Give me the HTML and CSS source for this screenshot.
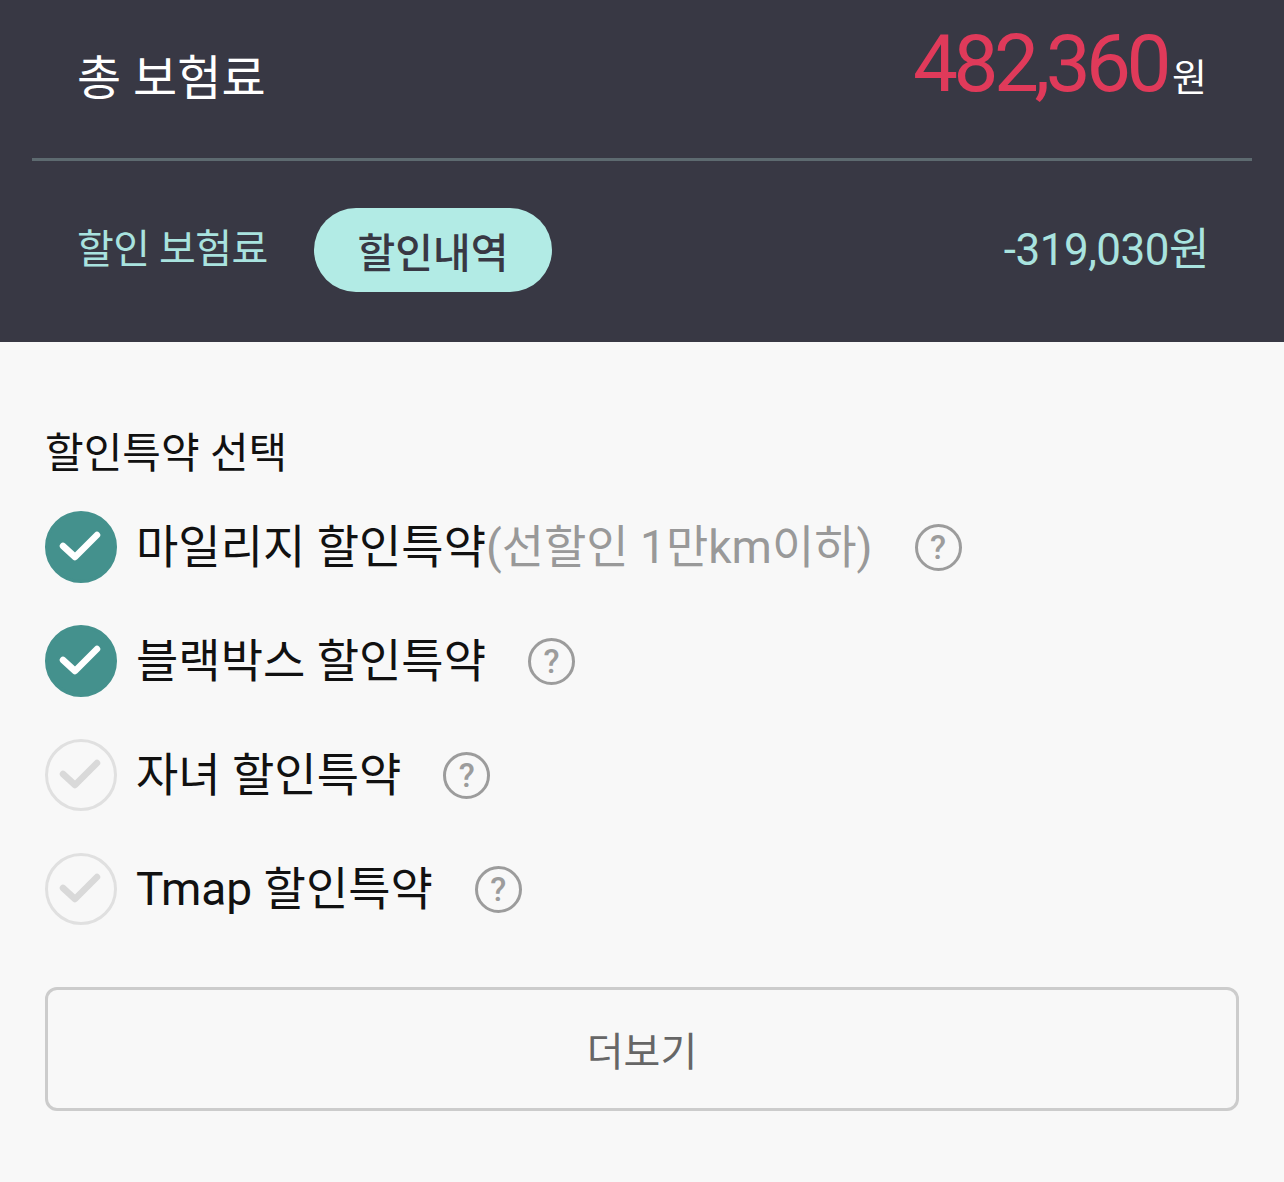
FILE: index.html
```html
<!DOCTYPE html>
<html>
<head>
    <title>할인특약 선택</title>
    <link rel="stylesheet" href="styles.css">
</head>
<body>
    <div class="summary">
        <div class="total-row">
            <span class="total-label">총 보험료</span>
            <span class="total-price">482,360<span class="won">원</span></span>
        </div>
        <div class="divider"></div>
        <div class="discount-row">
            <span class="discount-label">할인 보험료</span>
            <button class="history-pill">할인내역</button>
            <span class="discount-price">-319,030원</span>
        </div>
    </div>

    <div class="options">
        <h2 class="options-title">할인특약 선택</h2>
        <ul class="option-list">
            <li class="option checked">
                <span class="check"><svg viewBox="0 0 72 72"><path d="M18 35 L30 46 L52 24"/></svg></span>
                <span class="option-name">마일리지 할인특약<span class="note">(선할인 1만km이하)</span></span>
                <span class="help">?</span>
            </li>
            <li class="option checked">
                <span class="check"><svg viewBox="0 0 72 72"><path d="M18 35 L30 46 L52 24"/></svg></span>
                <span class="option-name">블랙박스 할인특약</span>
                <span class="help">?</span>
            </li>
            <li class="option">
                <span class="check"><svg viewBox="0 0 72 72"><path d="M18 35 L30 46 L52 24"/></svg></span>
                <span class="option-name">자녀 할인특약</span>
                <span class="help">?</span>
            </li>
            <li class="option">
                <span class="check"><svg viewBox="0 0 72 72"><path d="M18 35 L30 46 L52 24"/></svg></span>
                <span class="option-name">Tmap 할인특약</span>
                <span class="help">?</span>
            </li>
        </ul>
        <button class="more-button">더보기</button>
    </div>
</body>
</html>
```

FILE: styles.css
```css
body {
    margin: 0;
    font-family: Roboto, "Noto Sans CJK KR", sans-serif;
    background-color: #f8f8f8;
}

.summary {
    background-color: #383844;
    padding: 0 32px;
    height: 342px;
}

.total-row {
    height: 158px;
    display: flex;
    align-items: center;
    justify-content: space-between;
    padding: 0 45px;
}

.total-label {
    color: #ffffff;
    font-size: 48px;
    line-height: 1;
}

.total-price {
    color: #e03a5a;
    font-size: 80px;
    line-height: 1;
    margin-top: -30px;
    letter-spacing: -4.5px;
}

.won {
    color: #ffffff;
    font-size: 38px;
    letter-spacing: 0;
    margin-left: 5px;
}

.divider {
    height: 3px;
    background-color: #5d6a70;
}

.discount-row {
    height: 181px;
    display: flex;
    align-items: center;
    padding: 0 45px;
    margin-top: -2px;
}

.discount-label {
    color: #a9e3df;
    font-size: 40px;
    line-height: 1;
    letter-spacing: -0.5px;
}

.history-pill {
    margin-left: 46px;
    width: 238px;
    height: 84px;
    border: none;
    border-radius: 42px;
    background-color: #b2ebe5;
    color: #383844;
    font-family: Roboto, "Noto Sans CJK KR", sans-serif;
    font-size: 41px;
    font-weight: 500;
    padding: 0;
    cursor: pointer;
}

.discount-price {
    margin-left: auto;
    color: #a9e3df;
    font-size: 44px;
    line-height: 1;
    letter-spacing: -0.5px;
    margin-right: -2px;
}

.options {
    padding: 86px 45px 0;
}

.options-title {
    margin: 0 0 10px;
    font-size: 42px;
    font-weight: normal;
    color: #111111;
    line-height: 52px;
}

.option-list {
    list-style: none;
    margin: 0;
    padding: 0;
}

.option {
    height: 114px;
    display: flex;
    align-items: center;
}

.check {
    width: 72px;
    height: 72px;
    border-radius: 50%;
    box-sizing: border-box;
    border: 3px solid #e0e0e0;
    background-color: #f8f8f8;
    flex-shrink: 0;
}

.check svg {
    display: block;
    width: 72px;
    height: 72px;
    margin: -3px;
}

.check path {
    fill: none;
    stroke: #d9d9d9;
    stroke-width: 6.5;
    stroke-linecap: round;
    stroke-linejoin: round;
}

.option.checked .check {
    background-color: #44918d;
    border-color: #44918d;
}

.option.checked .check path {
    stroke: #ffffff;
}

.option-name {
    margin-left: 19px;
    font-size: 46px;
    color: #111111;
    line-height: 1;
}

.note {
    color: #999999;
}

.help {
    margin-left: 42px;
    width: 47px;
    height: 47px;
    box-sizing: border-box;
    border: 3px solid #9c9c9c;
    border-radius: 50%;
    color: #9c9c9c;
    font-size: 33px;
    font-weight: 500;
    display: flex;
    align-items: center;
    justify-content: center;
    line-height: 1;
}

.more-button {
    display: block;
    width: 100%;
    height: 124px;
    margin-top: 41px;
    background-color: #f8f8f8;
    border: 3px solid #cccccc;
    border-radius: 12px;
    color: #666666;
    font-family: Roboto, "Noto Sans CJK KR", sans-serif;
    font-size: 40px;
    cursor: pointer;
}
```
